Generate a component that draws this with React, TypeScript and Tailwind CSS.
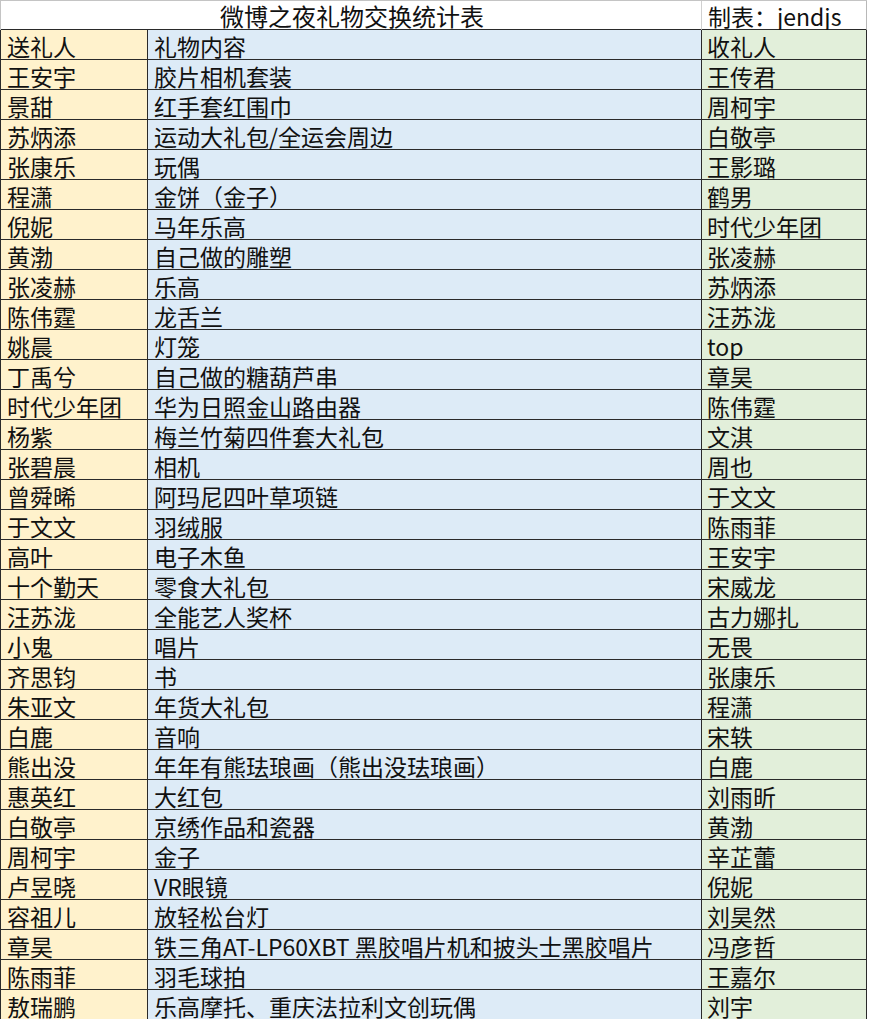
import React from "react";

const rows: [string, string, string][] = [
  ["送礼人", "礼物内容", "收礼人"],
  ["王安宇", "胶片相机套装", "王传君"],
  ["景甜", "红手套红围巾", "周柯宇"],
  ["苏炳添", "运动大礼包/全运会周边", "白敬亭"],
  ["张康乐", "玩偶", "王影璐"],
  ["程潇", "金饼（金子）", "鹤男"],
  ["倪妮", "马年乐高", "时代少年团"],
  ["黄渤", "自己做的雕塑", "张凌赫"],
  ["张凌赫", "乐高", "苏炳添"],
  ["陈伟霆", "龙舌兰", "汪苏泷"],
  ["姚晨", "灯笼", "top"],
  ["丁禹兮", "自己做的糖葫芦串", "章昊"],
  ["时代少年团", "华为日照金山路由器", "陈伟霆"],
  ["杨紫", "梅兰竹菊四件套大礼包", "文淇"],
  ["张碧晨", "相机", "周也"],
  ["曾舜晞", "阿玛尼四叶草项链", "于文文"],
  ["于文文", "羽绒服", "陈雨菲"],
  ["高叶", "电子木鱼", "王安宇"],
  ["十个勤天", "零食大礼包", "宋威龙"],
  ["汪苏泷", "全能艺人奖杯", "古力娜扎"],
  ["小鬼", "唱片", "无畏"],
  ["齐思钧", "书", "张康乐"],
  ["朱亚文", "年货大礼包", "程潇"],
  ["白鹿", "音响", "宋轶"],
  ["熊出没", "年年有熊珐琅画（熊出没珐琅画）", "白鹿"],
  ["惠英红", "大红包", "刘雨昕"],
  ["白敬亭", "京绣作品和瓷器", "黄渤"],
  ["周柯宇", "金子", "辛芷蕾"],
  ["卢昱晓", "VR眼镜", "倪妮"],
  ["容祖儿", "放轻松台灯", "刘昊然"],
  ["章昊", "铁三角AT-LP60XBT 黑胶唱片机和披头士黑胶唱片", "冯彦哲"],
  ["陈雨菲", "羽毛球拍", "王嘉尔"],
  ["敖瑞鹏", "乐高摩托、重庆法拉利文创玩偶", "刘宇"],
];

const font = { fontFamily: '"Noto Sans CJK SC", "Noto Sans", sans-serif' };

const App: React.FC = () => {
  return (
    <div className="w-[869px] h-[1019px] overflow-hidden bg-white text-[23px] text-[#111]" style={font}>
      <div className="w-[867px]">
        {/* title row */}
        <div className="flex h-[30px] border-t border-l border-[#c4c4c4]">
          <div className="w-[701px] h-[30px] border-r border-b-2 border-r-[#d0d0d0] border-b-[#2a2a2a] flex justify-center text-[24px] leading-[24px] pt-[3px]">
            <span className="pl-[2px]">微博之夜礼物交换统计表</span>
          </div>
          <div className="w-[165px] h-[30px] border-r border-b-2 border-r-[#b8b8b8] border-b-[#2a2a2a] pl-[6px] leading-[24px] pt-[3px] whitespace-nowrap">
            制表：jendjs
          </div>
        </div>
        {/* data rows */}
        {rows.map((r, i) => (
          <div key={i} className="flex h-[30px] leading-[24px]">
            <div className="w-[148px] h-[30px] bg-[#fff2cc] border-l border-r border-b border-[#2a2a2a] pl-[6px] pt-[4px] whitespace-nowrap">
              {r[0]}
            </div>
            <div className="w-[554px] h-[30px] bg-[#ddebf7] border-r border-b border-[#2a2a2a] pl-[6px] pt-[4px] whitespace-nowrap">
              {r[1]}
            </div>
            <div className="w-[165px] h-[30px] bg-[#e2efda] border-r border-b border-[#2a2a2a] pl-[5px] pt-[4px] whitespace-nowrap">
              {r[2]}
            </div>
          </div>
        ))}
      </div>
    </div>
  );
};

export default App;
